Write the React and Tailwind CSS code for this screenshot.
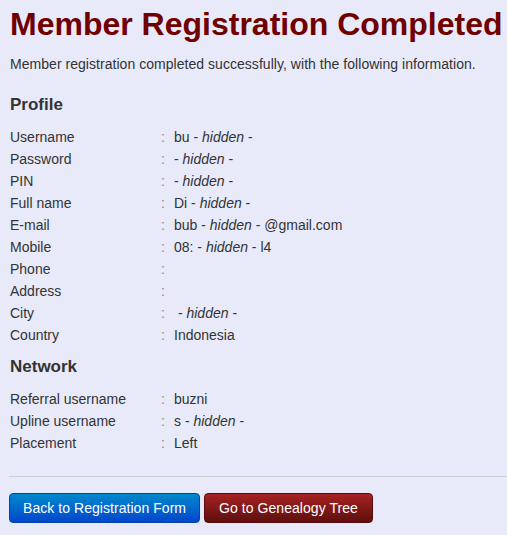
import React from "react";

const Hidden = () => <i className="italic">hidden</i>;

function Row({ label, children }) {
  return (
    <div className="flex h-[22px] items-center">
      <div className="w-[151px] shrink-0">{label}</div>
      <div className="w-[13px] shrink-0 text-[#888]">:</div>
      <div className="whitespace-pre">{children}</div>
    </div>
  );
}

export default function App() {
  return (
    <div className="min-h-[535px] w-[507px] overflow-hidden bg-[#e8eafa] px-[10px] text-[14px] text-[#333] [font-family:'Liberation_Sans',Arial,sans-serif]">
      <h1 className="mt-[4px] whitespace-nowrap text-[32px] font-bold leading-[40px] text-[#700000]">
        Member Registration Completed
      </h1>
      <p className="mt-[10px] leading-[20px] tracking-[0.04px]">
        Member registration completed successfully, with the following information.
      </p>
      <h4 className="mt-[21px] text-[17px] font-bold leading-[20px]">Profile</h4>
      <div className="mt-[11px]">
        <Row label="Username">bu - <Hidden /> -</Row>
        <Row label="Password">- <Hidden /> -</Row>
        <Row label="PIN">- <Hidden /> -</Row>
        <Row label="Full name">Di - <Hidden /> -</Row>
        <Row label="E-mail">bub - <Hidden /> - @gmail.com</Row>
        <Row label="Mobile">08: - <Hidden /> - l4</Row>
        <Row label="Phone"></Row>
        <Row label="Address"></Row>
        <Row label="City"> - <Hidden /> -</Row>
        <Row label="Country">Indonesia</Row>
      </div>
      <h4 className="mt-[11px] text-[17px] font-bold leading-[20px]">Network</h4>
      <div className="mt-[11px]">
        <Row label="Referral username">buzni</Row>
        <Row label="Upline username">s - <Hidden /> -</Row>
        <Row label="Placement">Left</Row>
      </div>
      <hr className="mr-[-10px] ml-[-1px] mt-[22px] border-0 border-t border-[#cfcfd8]" />
      <div className="mt-[16px] ml-[-1px] flex gap-[4px]">
        <button className="h-[30px] rounded-[4px] border border-[#0044aa] bg-gradient-to-b from-[#0088cc] to-[#0044cc] px-[13px] text-[14px] tracking-[0.05px] text-white">
          Back to Registration Form
        </button>
        <button className="h-[30px] rounded-[4px] border border-[#5a0c0c] bg-gradient-to-b from-[#a82222] to-[#5e0f0f] px-[14px] text-[14px] tracking-[0.05px] text-white">
          Go to Genealogy Tree
        </button>
      </div>
    </div>
  );
}
